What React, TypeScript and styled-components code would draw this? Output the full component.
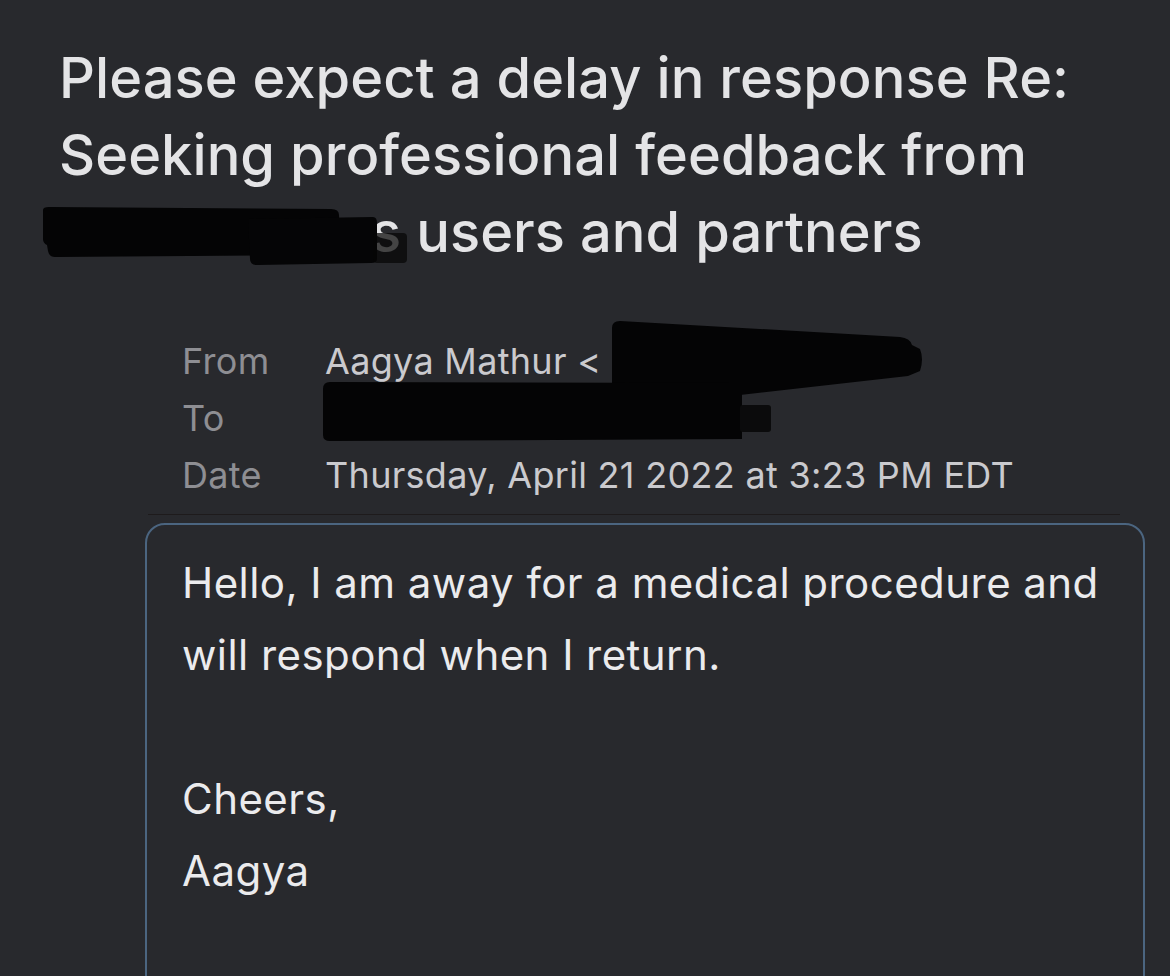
import React from "react";
import styled, { createGlobalStyle } from "styled-components";

const GlobalStyle = createGlobalStyle`
  html, body {
    margin: 0;
    padding: 0;
    background: #28292d;
    overflow: hidden;
  }
  body {
    font-family: Inter, "Noto Sans", "Liberation Sans", sans-serif;
    -webkit-font-smoothing: antialiased;
  }
`;

const Page = styled.main`
  height: 976px;
  overflow: hidden;
  background: #28292d;
  padding-top: 40px;
  box-sizing: border-box;
`;

const Subject = styled.h1`
  margin: 0 0 0 59px;
  font-size: 56px;
  font-weight: 500;
  line-height: 77px;
  letter-spacing: 0.05px;
  color: #e4e4e6;
  white-space: nowrap;
`;

const SubjectLine = styled.span<{ $indent?: number }>`
  display: block;
  position: relative;
  padding-left: ${(p) => p.$indent ?? 0}px;
`;

const Scribble = styled.svg`
  position: absolute;
  pointer-events: none;
  overflow: visible;
`;

const Headers = styled.dl`
  position: relative;
  margin: 62px 0 0 0;
  padding-left: 182px;
  display: grid;
  grid-template-columns: 143px 1fr;
  font-size: 36px;
  line-height: 57px;
  letter-spacing: 0.3px;
`;

const Label = styled.dt`
  margin: 0;
  color: #8e8e93;
`;

const Value = styled.dd`
  margin: 0;
  color: #cacace;
  white-space: nowrap;
  min-height: 57px;
`;

const Divider = styled.hr`
  border: 0;
  height: 1px;
  background: #1e1b1c;
  margin: 10px 50px 0 148px;
`;

const MessageBox = styled.section`
  margin: 8px 25px 0 145px;
  border: 2px solid #4b6580;
  border-radius: 20px;
  padding: 22px 35px;
  min-height: 640px;
  font-size: 42px;
  line-height: 72px;
  letter-spacing: 0.45px;
  color: #ebebed;
`;

const Paragraph = styled.p`
  margin: 0;
`;

const Spacer = styled.div`
  height: 72px;
`;

export default function App() {
  return (
    <>
      <GlobalStyle />
      <Page>
        <Subject>
          <SubjectLine>Please expect a delay in response Re:</SubjectLine>
          <SubjectLine>Seeking professional feedback from</SubjectLine>
          <SubjectLine $indent={312}>
            s users and partners
            <Scribble
              width="364"
              height="58"
              viewBox="0 0 364 58"
              style={{ left: -16, top: 13 }}
            >
              <path
                d="M0,3 Q0,0 6,0 L288,2 Q296,2 296,8 L298,48 L12,50 Q6,50 5,44 L4,38 Q0,36 0,32 Z"
                fill="#040405"
              />
              <path
                d="M205,12 L330,10 Q334,10 334,16 L334,52 Q334,56 328,56 L214,58 Q207,58 207,52 Z"
                fill="#050506"
              />
              <rect x="330" y="26" width="34" height="30" rx="4" fill="#050506" opacity="0.72" />
            </Scribble>
          </SubjectLine>
        </Subject>

        <Headers>
          <Label>From</Label>
          <Value>Aagya Mathur &lt;</Value>
          <Label>To</Label>
          <Value />
          <Label>Date</Label>
          <Value>Thursday, April 21 2022 at 3:23 PM EDT</Value>
          <Scribble
            width="610"
            height="130"
            viewBox="320 318 610 130"
            style={{ left: 320, top: -16 }}
          >
            <path
              d="M612,329 Q612,322 620,322 L900,338 Q910,339 912,346 L920,350 Q924,360 920,372 L908,377 L740,396 L612,396 Z"
              fill="#040405"
            />
            <path
              d="M323,390 Q323,383 330,383 L742,384 L742,440 L330,442 Q323,442 323,436 Z"
              fill="#040405"
            />
            <rect x="740" y="406" width="31" height="27" rx="3" fill="#0b0b0c" />
          </Scribble>
        </Headers>

        <Divider />

        <MessageBox>
          <Paragraph>
            Hello, I am away for a medical procedure and
            <br />
            will respond when I return.
          </Paragraph>
          <Spacer />
          <Paragraph>
            Cheers,
            <br />
            Aagya
          </Paragraph>
        </MessageBox>
      </Page>
    </>
  );
}
